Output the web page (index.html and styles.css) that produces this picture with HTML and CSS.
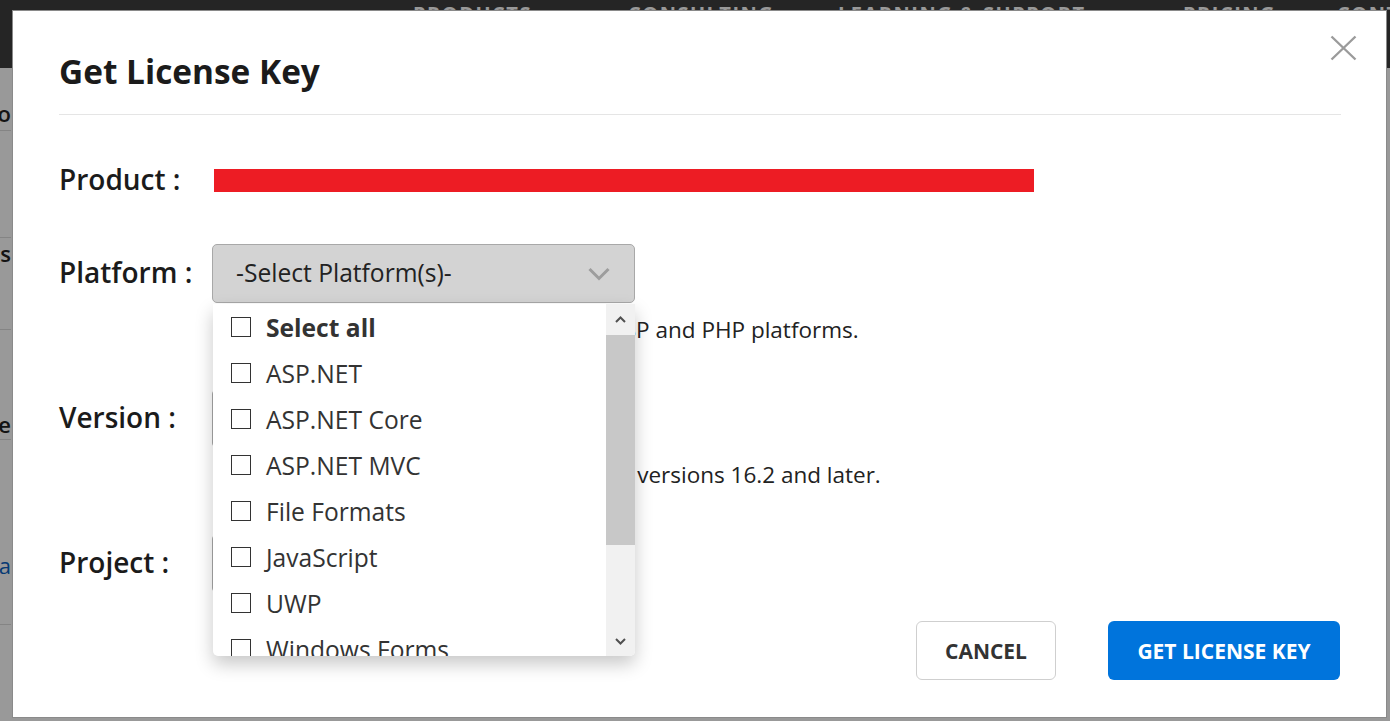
FILE: index.html
```html
<!DOCTYPE html>
<html lang="en">
<head>
<meta charset="utf-8">
<title>Get License Key</title>
<link rel="stylesheet" href="styles.css">
</head>
<body>
<div class="site">
  <header class="site-header">
    <nav class="site-nav">
      <span>PRODUCTS</span>
      <span>CONSULTING</span>
      <span>LEARNING &amp; SUPPORT</span>
      <span>PRICING</span>
      <span>CONTACT</span>
    </nav>
  </header>
  <main class="site-main">
    <ul class="side-list">
      <li class="side-item side-a"><span>Info</span></li>
      <li class="side-item side-b"><span>Name</span></li>
      <li class="side-item side-c"><span>Licenses</span></li>
      <li class="side-item side-d"><span>Date</span></li>
      <li class="side-item side-e side-link"><span>Data</span></li>
      <li class="side-item side-f"><span></span></li>
    </ul>
  </main>
</div>
<div class="backdrop"></div>
<div class="modal" role="dialog" aria-labelledby="modal-title">
  <button class="close" type="button" aria-label="Close">
    <svg width="27" height="26" viewBox="0 0 27 26"><path d="M1.5 1.5 L25.5 24.5 M25.5 1.5 L1.5 24.5" stroke="#9b9b9b" stroke-width="2.4" fill="none"/></svg>
  </button>
  <h2 class="modal-title" id="modal-title">Get License Key</h2>
  <hr class="divider">
  <div class="form">
    <div class="row row-product">
      <span class="label">Product :</span>
      <div class="redacted"></div>
    </div>
    <div class="row row-platform">
      <span class="label">Platform :</span>
      <div class="field">
        <div class="select select-open">
          <span>-Select Platform(s)-</span>
          <svg class="chevron" width="22" height="14" viewBox="0 0 22 14"><path d="M1.5 2 L11 11.5 L20.5 2" stroke="#9d9d9d" stroke-width="3" fill="none"/></svg>
        </div>
        <div class="dropdown">
          <ul class="options">
            <li class="option option-all"><span class="checkbox"></span>Select all</li>
            <li class="option"><span class="checkbox"></span>ASP.NET</li>
            <li class="option"><span class="checkbox"></span>ASP.NET Core</li>
            <li class="option"><span class="checkbox"></span>ASP.NET MVC</li>
            <li class="option"><span class="checkbox"></span>File Formats</li>
            <li class="option"><span class="checkbox"></span>JavaScript</li>
            <li class="option"><span class="checkbox"></span>UWP</li>
            <li class="option"><span class="checkbox"></span>Windows Forms</li>
          </ul>
          <div class="scrollbar">
            <div class="sb-btn sb-up">
              <svg width="11" height="7" viewBox="0 0 11 7"><path d="M1 6 L5.5 1.5 L10 6" stroke="#505050" stroke-width="2" fill="none"/></svg>
            </div>
            <div class="sb-track"><div class="sb-thumb"></div></div>
            <div class="sb-btn sb-down">
              <svg width="11" height="7" viewBox="0 0 11 7"><path d="M1 1 L5.5 5.5 L10 1" stroke="#505050" stroke-width="2" fill="none"/></svg>
            </div>
          </div>
        </div>
      </div>
    </div>
    <p class="help">Platform selection is not necessary for JSP and PHP platforms.</p>
    <div class="row row-version">
      <span class="label">Version :</span>
      <div class="field"><div class="select select-plain"></div></div>
    </div>
    <p class="help">Keys may be generated only for product versions 16.2 and later.</p>
    <div class="row row-project">
      <span class="label">Project :</span>
      <div class="field"><div class="select select-plain"></div></div>
    </div>
  </div>
  <div class="actions">
    <button class="btn btn-cancel" type="button">CANCEL</button>
    <button class="btn btn-primary" type="button">GET LICENSE KEY</button>
  </div>
</div>
</body>
</html>
```
FILE: styles.css
```css
* { box-sizing: border-box; }
html, body { margin: 0; height: 100%; }
body {
  font-family: "Open Sans", "Noto Sans", sans-serif;
  background: #fff;
  overflow: hidden;
}

/* page behind the dialog */
.site { height: 100vh; background: #fff; }
.site-header { height: 68px; background: #3f3f3f; }
.site-nav {
  display: grid;
  grid-template-columns: 215px 210px 345px 154px auto;
  padding: 4px 0 0 413px;
  color: #fff;
  font-size: 20px;
  font-weight: 700;
  letter-spacing: 1.5px;
  line-height: 20px;
  white-space: nowrap;
}
.site-main { display: flex; }
.side-list { list-style: none; margin: 0; padding: 0; width: 11px; }
.side-item {
  display: flex;
  justify-content: flex-end;
  overflow: hidden;
  border-bottom: 1px solid #ddd;
  font-size: 22px;
  font-weight: 600;
  color: #222;
  white-space: nowrap;
}
.side-a { height: 63px; align-items: flex-end; padding-bottom: 2px; }
.side-b { height: 107px; align-items: flex-start; padding-top: 104px; }
.side-c { height: 92px; }
.side-d { height: 110px; align-items: flex-end; padding-bottom: 0; }
.side-e { height: 185px; align-items: flex-start; padding-top: 110px; }
.side-link { color: #0a62c2; font-weight: 400; }
.side-f { height: 96px; border-bottom: 0; }

.backdrop {
  position: fixed;
  inset: 0;
  background: rgba(0, 0, 0, 0.4);
}

/* dialog */
.modal {
  position: fixed;
  left: 12px;
  top: 10px;
  width: 1375px;
  height: 708px;
  background: #fff;
  border: 1px solid #8a8a8a;
  padding: 38px 45px 0 46px;
  color: #1b1b1b;
}
.close {
  position: absolute;
  top: 24px;
  right: 29px;
  width: 27px;
  height: 26px;
  padding: 0;
  border: 0;
  background: none;
}
.close svg { display: block; }
.modal-title {
  margin: 0;
  font-size: 33.4px;
  font-weight: 700;
  line-height: 44px;
  color: #1b1b1b;
}
.divider {
  margin: 21px 0 0;
  border: 0;
  border-top: 1px solid #e5e5e5;
}

.form { display: flex; flex-direction: column; }
.row {
  display: flex;
  align-items: center;
  height: 59px;
}
.row-product { margin-top: 36px; }
.row-platform { margin-top: 34px; }
.row-version, .row-project { margin-top: 42px; }
.label {
  width: 153px;
  flex: none;
  padding-bottom: 3px;
  font-size: 28px;
  font-weight: 600;
  color: #1b1b1b;
}
.redacted {
  width: 820px;
  height: 23px;
  margin: 0 0 1px 2px;
  background: #ed1c24;
}
.field { position: relative; width: 423px; }
.select {
  height: 59px;
  border: 1px solid #a8a8a8;
  border-radius: 5px;
  display: flex;
  align-items: center;
  justify-content: space-between;
  padding: 0 24px 2px 23px;
  font-size: 24.6px;
  color: #222;
}
.select-open { background: #d3d3d3; }
.select-plain { background: #fff; }
.chevron { display: block; margin-top: 2px; }

.help {
  margin: 10px 0 0 153px;
  font-size: 22.5px;
  line-height: 34px;
  color: #222;
  white-space: nowrap;
}
.help + .row { margin-top: 42px; }

/* open multiselect menu */
.dropdown {
  position: absolute;
  top: 60px;
  left: 1px;
  width: 422px;
  height: 352px;
  display: flex;
  background: #fff;
  border-radius: 0 0 5px 5px;
  box-shadow: 0 8px 18px rgba(0, 0, 0, 0.22);
  overflow: hidden;
  z-index: 2;
}
.options {
  flex: 1;
  list-style: none;
  margin: 0;
  padding: 0;
  overflow: hidden;
}
.option {
  display: flex;
  align-items: center;
  gap: 15px;
  height: 46px;
  flex: none;
  padding-left: 18px;
  font-size: 24.6px;
  color: #333;
  white-space: nowrap;
}
.option-all { font-weight: 700; }
.checkbox {
  width: 20px;
  height: 20px;
  flex: none;
  border: 1px solid #333;
  background: #fff;
}
.scrollbar {
  width: 29px;
  flex: none;
  display: flex;
  flex-direction: column;
  background: #f1f1f1;
}
.sb-btn {
  flex: none;
  display: flex;
  align-items: center;
  justify-content: center;
}
.sb-up { height: 31px; }
.sb-down { height: 30px; }
.sb-btn svg { display: block; }
.sb-track { flex: 1; }
.sb-thumb { height: 210px; background: #c8c8c8; }

/* footer buttons */
.actions {
  display: flex;
  justify-content: flex-end;
  gap: 52px;
  margin-top: 28px;
  padding-right: 1px;
}
.btn {
  height: 59px;
  border-radius: 6px;
  font-family: inherit;
  font-size: 21px;
  font-weight: 700;
  cursor: pointer;
}
.btn-cancel {
  width: 140px;
  background: #fff;
  border: 1px solid #cfcfcf;
  color: #333;
}
.btn-primary {
  width: 232px;
  background: #0074dc;
  border: 0;
  color: #fff;
}
```
